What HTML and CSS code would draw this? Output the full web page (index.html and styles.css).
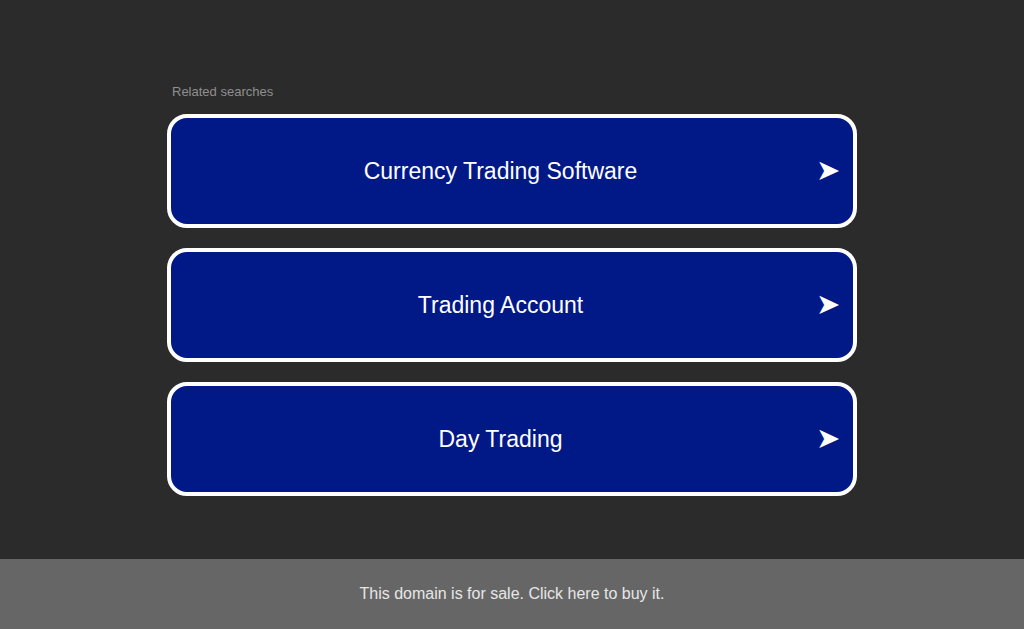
FILE: index.html
```html
<!DOCTYPE html>
<html lang="en">
<head>
    <meta charset="UTF-8">
    <meta name="viewport" content="width=device-width, initial-scale=1.0">
    <title>Related searches</title>
    <link rel="stylesheet" href="styles.css">
</head>
<body>

    <!-- Related searches -->
    <div id="main">
        <div id="related-title">Related searches</div>
        <a class="search-link" href="#">
            <span class="search-text">Currency Trading Software</span>
            <span class="search-arrow">&#10148;</span>
        </a>
        <a class="search-link" href="#">
            <span class="search-text">Trading Account</span>
            <span class="search-arrow">&#10148;</span>
        </a>
        <a class="search-link" href="#">
            <span class="search-text">Day Trading</span>
            <span class="search-arrow">&#10148;</span>
        </a>
    </div>

    <!-- Sale banner -->
    <div id="footer">
        <a href="#" id="sale-link">This domain is for sale. Click here to buy it.</a>
    </div>

</body>
</html>
```

FILE: styles.css
```css
html, body {
    height: 100%;
}

body {
    margin: 0;
    padding: 0;
    background-color: #2b2b2b;
    font-family: "Liberation Sans", Arial, sans-serif;
    display: flex;
    flex-direction: column;
    overflow: hidden;
}

#main {
    flex: 1;
    width: 690px;
    margin: 0 auto;
    padding-top: 84px;
    display: flex;
    flex-direction: column;
    gap: 20px;
}

#related-title {
    color: #8f8f8f;
    font-size: 13px;
    padding-left: 5px;
    margin-bottom: -5px;
}

.search-link {
    display: flex;
    align-items: center;
    height: 106px;
    border: 4px solid white;
    border-radius: 20px;
    background-color: #011887;
    color: white;
    text-decoration: none;
    padding: 0 13px 0 14px;
}

.search-text {
    flex: 1;
    text-align: center;
    font-size: 23px;
    margin-top: 0;
}

.search-arrow {
    font-size: 29px;
    margin-top: -2px;
}

#footer {
    height: 70px;
    background-color: #666666;
    display: flex;
    align-items: center;
    justify-content: center;
}

#sale-link {
    color: #e6e6e6;
    font-size: 16px;
    text-decoration: none;
}
```
